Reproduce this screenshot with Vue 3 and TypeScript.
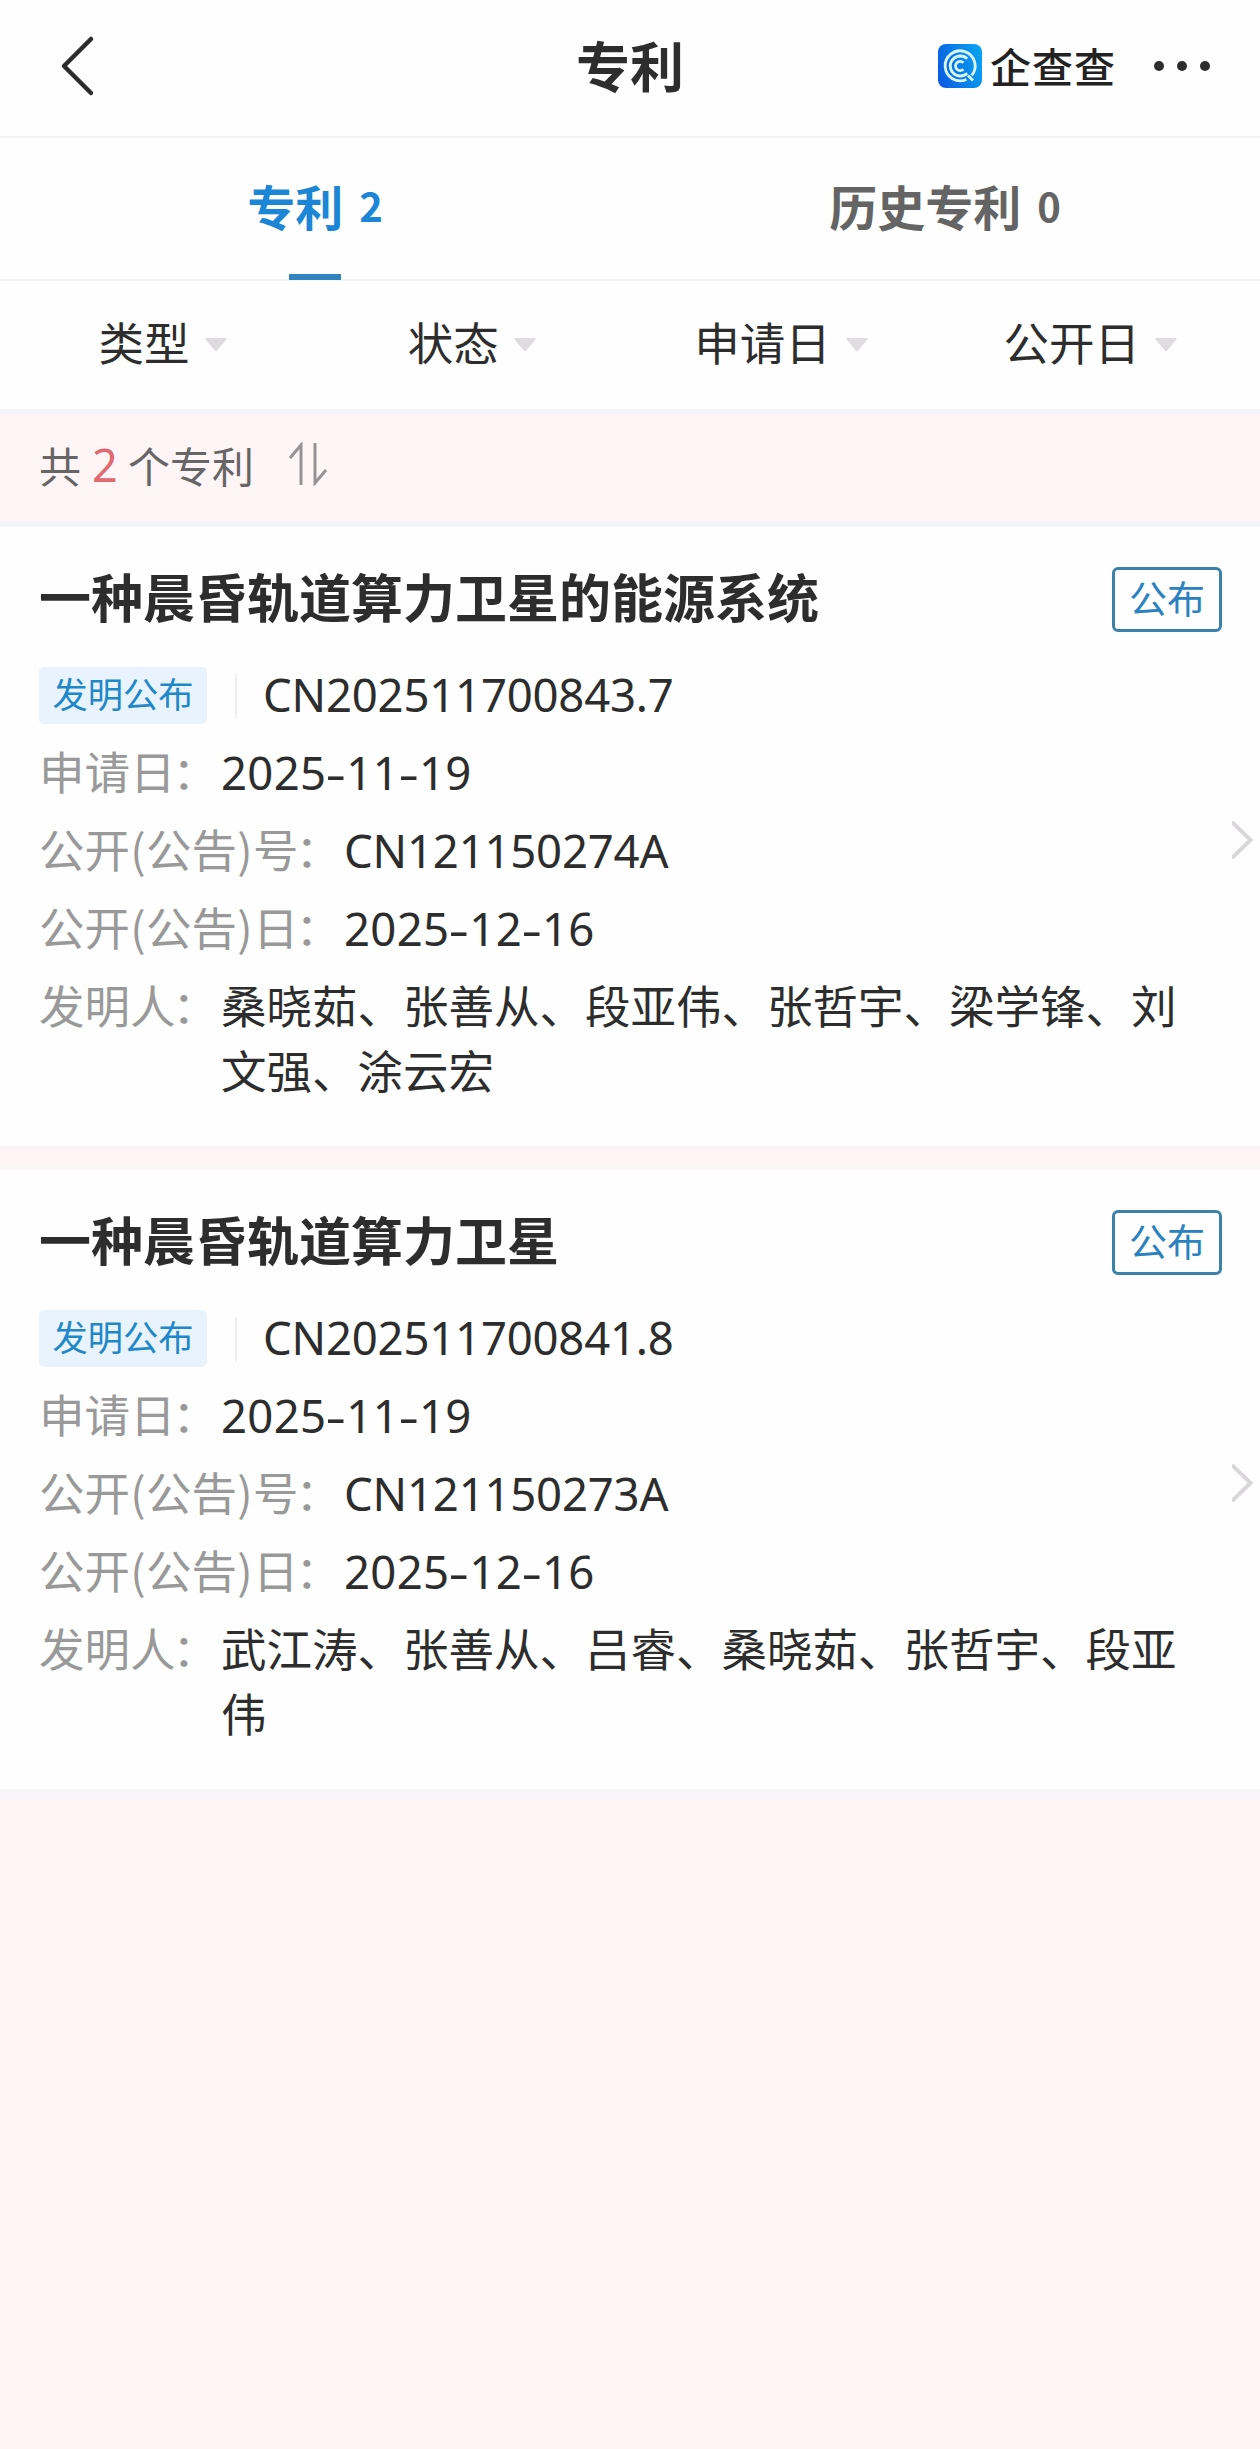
<script setup lang="ts">
interface Field {
  label: string
  value: string
}

interface Patent {
  title: string
  status: string
  kind: string
  applicationNo: string
  fields: Field[]
  inventors: string
}

const tabs = [
  { name: '专利', count: 2, active: true },
  { name: '历史专利', count: 0, active: false },
]

const filters = ['类型', '状态', '申请日', '公开日']

const patents: Patent[] = [
  {
    title: '一种晨昏轨道算力卫星的能源系统',
    status: '公布',
    kind: '发明公布',
    applicationNo: 'CN202511700843.7',
    fields: [
      { label: '申请日：', value: '2025-11-19' },
      { label: '公开(公告)号：', value: 'CN121150274A' },
      { label: '公开(公告)日：', value: '2025-12-16' },
    ],
    inventors: '桑晓茹、张善从、段亚伟、张哲宇、梁学锋、刘文强、涂云宏',
  },
  {
    title: '一种晨昏轨道算力卫星',
    status: '公布',
    kind: '发明公布',
    applicationNo: 'CN202511700841.8',
    fields: [
      { label: '申请日：', value: '2025-11-19' },
      { label: '公开(公告)号：', value: 'CN121150273A' },
      { label: '公开(公告)日：', value: '2025-12-16' },
    ],
    inventors: '武江涛、张善从、吕睿、桑晓茹、张哲宇、段亚伟',
  },
]

// Splits a string so that hyphens, parentheses and colons can be given their own width.
const pieces = (text: string): string[] => text.split(/([-()：])/).filter(Boolean)

const pieceClass = (piece: string): string => {
  if (piece === '-') return 'dash'
  if (piece === '：') return 'colon'
  return piece === '(' || piece === ')' ? 'paren' : ''
}
</script>

<template>
  <div class="page">
    <header class="navbar">
      <div class="side">
        <svg class="back" width="40" height="64" viewBox="0 0 40 64">
          <path d="M34 5 L7 32 L34 59" />
        </svg>
      </div>
      <h1>专利</h1>
      <div class="side right">
        <svg class="logo" width="44" height="44" viewBox="0 0 44 44">
          <defs>
            <linearGradient id="logo-fill" x1="0" y1="0.6" x2="1" y2="0.3">
              <stop offset="0" stop-color="#0a5fe0" />
              <stop offset="1" stop-color="#08a2f2" />
            </linearGradient>
          </defs>
          <rect width="44" height="44" rx="8" fill="url(#logo-fill)" />
          <g fill="none" stroke="#d9f5ff" stroke-width="2.8">
            <path d="M33.6 31.5 A15 15 0 1 0 28.5 35.4 M30 31.5 L35 36.5" />
            <path d="M29.2 14.8 A10 10 0 1 0 29.2 29.2" />
            <path d="M25.4 18.8 A4.6 4.6 0 1 0 25.4 25.2" />
          </g>
        </svg>
        <span class="brand">企查查</span>
        <svg class="more" width="58" height="12" viewBox="0 0 58 12">
          <circle cx="6" cy="6" r="5" />
          <circle cx="29" cy="6" r="5" />
          <circle cx="52" cy="6" r="5" />
        </svg>
      </div>
    </header>

    <nav class="tabs">
      <div v-for="tab in tabs" :key="tab.name" class="tab" :class="{ active: tab.active }">
        <span class="tab-name">{{ tab.name }}</span>
        <span class="tab-count">{{ tab.count }}</span>
      </div>
    </nav>

    <div class="filters">
      <div v-for="filter in filters" :key="filter" class="filter">
        <span>{{ filter }}</span>
        <svg width="22" height="14" viewBox="0 0 22 14">
          <path d="M1.5 0 H20.5 Q22.5 0 21 2 L12.2 12.6 Q11 14 9.8 12.6 L1 2 Q-0.5 0 1.5 0 Z" />
        </svg>
      </div>
    </div>

    <div class="summary">
      <span>共</span>
      <span class="total">2</span>
      <span>个专利</span>
      <svg class="sort" width="40" height="44" viewBox="0 0 40 44">
        <path d="M2 16 L13 3 V43 M27 1 V41 L38 28" />
      </svg>
    </div>

    <main>
      <article v-for="patent in patents" :key="patent.applicationNo" class="card">
        <div class="content">
          <div class="heading">
            <h2>{{ patent.title }}</h2>
            <span class="status">{{ patent.status }}</span>
          </div>
          <div class="row number">
            <span class="kind">{{ patent.kind }}</span>
            <i class="divider"></i>
            <span class="value code">{{ patent.applicationNo }}</span>
          </div>
          <div v-for="field in patent.fields" :key="field.label" class="row">
            <span class="label"><span v-for="(p, i) in pieces(field.label)" :key="i" :class="pieceClass(p)">{{ p }}</span></span>
            <span class="value" :class="{ code: field.value.startsWith('CN') }"><span v-for="(p, i) in pieces(field.value)" :key="i" :class="pieceClass(p)">{{ p }}</span></span>
          </div>
          <div class="row">
            <span class="label">发明人<span class="colon">：</span></span>
            <span class="names">{{ patent.inventors }}</span>
          </div>
        </div>
        <svg class="chevron" width="22" height="38" viewBox="0 0 22 38">
          <path d="M0 1 L18.5 19 L0 37" />
        </svg>
      </article>
    </main>
  </div>
</template>

<style>
body {
  margin: 0;
  background: #fff5f6;
}
</style>

<style scoped>
.page {
  width: 1260px;
  min-height: 2449px;
  background: #fff5f6;
  color: #2d2d2d;
  font-family: 'Noto Sans CJK SC', 'Noto Sans', sans-serif;
  font-size: 45.5px;
}

h1,
h2 {
  margin: 0;
}

svg {
  display: block;
  flex: none;
}

.navbar {
  display: flex;
  align-items: center;
  box-sizing: border-box;
  height: 138px;
  padding-bottom: 4px;
  background: #fefefe;
  border-bottom: 2px solid #f5f5f5;
}

.side {
  display: flex;
  flex: 1 1 0;
  align-items: center;
  min-width: 0;
}

.back {
  margin-left: 57px;
}

.back path {
  fill: none;
  stroke: #2b2b2b;
  stroke-width: 4.5;
  stroke-linecap: round;
  stroke-linejoin: round;
}

h1 {
  padding-bottom: 3px;
  font-size: 54px;
  font-weight: 700;
  line-height: 80px;
}

.right {
  box-sizing: border-box;
  justify-content: flex-end;
  margin-right: 49px;
  margin-left: -49px;
}

.brand {
  margin: 0 37px 0 8px;
  padding-bottom: 3px;
  font-size: 41px;
  font-weight: 500;
  letter-spacing: 1px;
  line-height: 60px;
  color: #222;
}

.more {
  fill: #2d2d2d;
}

.tabs {
  display: flex;
  box-sizing: border-box;
  height: 143px;
  background: #fefefe;
  border-bottom: 2px solid #f5f5f5;
}

.tab {
  position: relative;
  display: flex;
  flex: 1;
  align-items: center;
  justify-content: center;
  gap: 16px;
  padding-bottom: 7px;
  font-size: 48px;
  font-weight: 700;
  line-height: 70px;
  color: #646464;
}

.tab-count {
  font-size: 40px;
}

.tab.active {
  color: #1c86d6;
}

.tab.active::after {
  position: absolute;
  bottom: -1px;
  left: 50%;
  width: 52px;
  height: 6px;
  margin-left: -26px;
  background: #2f84bf;
  content: '';
}

.filters {
  display: flex;
  box-sizing: border-box;
  height: 128px;
  padding: 0 15px 9px 8px;
  background: #fefefe;
}

.filter {
  display: flex;
  flex: 1;
  align-items: center;
  justify-content: center;
  gap: 15px;
}

.filter svg {
  margin-top: 9px;
  fill: #dfdce0;
}

.summary {
  display: flex;
  align-items: center;
  box-sizing: border-box;
  height: 118px;
  padding: 0 0 7px 39px;
  font-size: 42px;
  color: #666;
  border-top: 5px solid #f6f3f8;
  border-bottom: 6px solid #f5f5f7;
}

.total {
  width: 25px;
  margin: 0 11px;
  font-family: 'Noto Sans', sans-serif;
  font-size: 45px;
  color: #e0686f;
}

.sort {
  margin-left: 34px;
}

.sort path {
  fill: none;
  stroke: #979196;
  stroke-width: 3;
}

.card {
  display: flex;
  align-items: center;
  box-sizing: border-box;
  height: 619px;
  background: #fefefe;
}

.card:first-child {
  margin-bottom: 24px;
  box-shadow: 0 4px 0 #f9f5f7;
}

.card:last-child {
  box-shadow: 0 -4px 0 #f9f5f7, 0 11px 0 #f7f5f7;
}

.content {
  flex: 1;
  align-self: flex-start;
  padding: 37px 0 0 39px;
}

.heading {
  display: flex;
  align-items: center;
  justify-content: space-between;
  height: 70px;
  margin-bottom: 29px;
}

h2 {
  padding-bottom: 7px;
  font-size: 52px;
  font-weight: 700;
  line-height: 70px;
  white-space: nowrap;
}

.status {
  box-sizing: border-box;
  width: 110px;
  height: 65px;
  margin-right: 10px;
  border: 3px solid #3c82a8;
  border-radius: 6px;
  font-size: 38px;
  line-height: 53px;
  text-align: center;
  color: #2b82c0;
}

.row {
  display: flex;
  align-items: flex-start;
  margin-bottom: 13px;
  line-height: 65px;
}

.number {
  align-items: center;
}

.kind {
  width: 168px;
  height: 57px;
  border-radius: 5px;
  background: #e9f3fe;
  font-size: 35.3px;
  line-height: 52px;
  text-align: center;
  color: #1f88c9;
}

.divider {
  width: 2px;
  height: 44px;
  margin: 0 26px 0 28px;
  background: #f1ecef;
}

.label,
.names {
  margin-top: -3px;
  margin-bottom: 3px;
}

.label {
  color: #999;
  white-space: nowrap;
}

.value {
  margin-top: -1px;
  margin-bottom: 1px;
  font-family: 'Noto Sans', sans-serif;
  letter-spacing: 0.3px;
  white-space: nowrap;
}

.code {
  letter-spacing: -0.2px;
}

.paren,
.dash,
.colon {
  display: inline-block;
  text-align: center;
}

.paren {
  width: 16px;
}

.dash {
  width: 20px;
  transform: scaleX(1.4);
}

.colon {
  width: 45.5px;
  text-indent: -6px;
}

.names {
  width: 980px;
}

.chevron {
  margin-top: 7px;
  margin-right: 6px;
}

.chevron path {
  fill: none;
  stroke: #d9d6da;
  stroke-width: 4;
}
</style>
